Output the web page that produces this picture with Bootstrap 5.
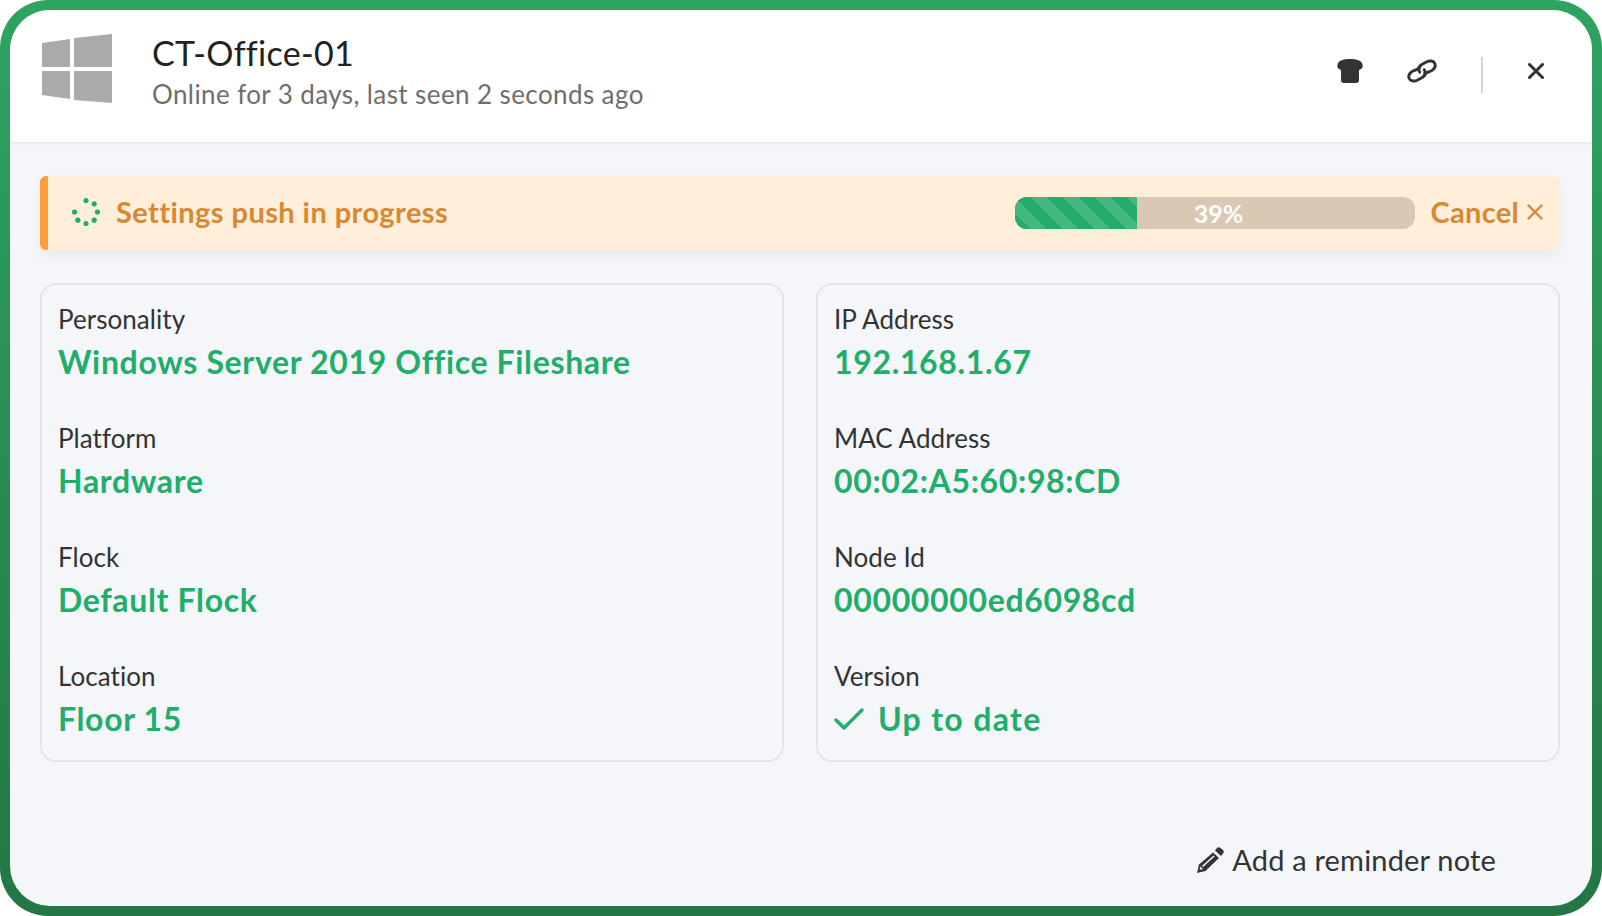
<!DOCTYPE html>
<html lang="en">
<head>
  <meta charset="UTF-8">
  <title>CT-Office-01</title>
  <link href="https://cdn.jsdelivr.net/npm/bootstrap@5.3.0/dist/css/bootstrap.min.css" rel="stylesheet">
  <style>
    html, body { height: 100%; }
    body { font-family: "Lato", "Open Sans", sans-serif; color: #333; background: #fff; }
    .frame { height: 916px; padding: 10px; border-radius: 48px; background: linear-gradient(180deg, #2fa362 0%, #237646 100%); }
    .frame-inner { height: 100%; border-radius: 40px; overflow: hidden; background: #f4f6fa; }
    .head { height: 132px; padding: 24px 48px 0 32px; background: #fff; box-shadow: 0 1px 4px rgba(0,0,0,.07); }
    .head-text { margin-left: 40px; }
    .title { font-size: 34px; line-height: 40px; margin-top: -1px; color: #222; letter-spacing: .3px; }
    .sub { font-size: 26px; line-height: 38px; margin-top: 2px; color: #6e6e6e; letter-spacing: .4px; }
    .tool { margin-top: 25px; line-height: 0; }
    .sep { width: 2px; height: 36px; background: #d4d4d4; margin: 23px 45px 0 44px; }
    .content { padding: 34px 32px 0 30px; }
    .push { height: 74px; border: 0; border-left: 8px solid #ff9f3b; border-radius: 6px; padding: 0 17px 2px 23px; margin: 0; background: #ffeeda; color: #d98832; font-size: 29px; font-weight: 700; box-shadow: 0 6px 16px rgba(0,0,0,.05); }
    .push-label { margin-left: 15px; letter-spacing: .43px; }
    .push-track { width: 400px; height: 32px; border-radius: 12px; background: #d9c9b4; margin-top: 2px; }
    .push-fill { background-color: #22ad6a; background-image: repeating-linear-gradient(45deg, #22ad6a 0, #22ad6a 11.3px, #44b680 11.3px, #44b680 22.6px); }
    .push-pct { left: 8px; right: 0; top: 0; line-height: 33px; text-align: center; color: #fff; font-size: 25px; font-weight: 700; }
    .cancel { margin-left: 16px; letter-spacing: .3px; }
    .info-grid { display: grid; grid-template-columns: 1fr 1fr; column-gap: 32px; margin-top: 33px; }
    .info-box { height: 479px; padding: 17px 16px 0; border: 2px solid #e3e5e9; border-radius: 16px; }
    .field { height: 119px; }
    .field-name { font-size: 26px; line-height: 34px; color: #333; letter-spacing: .05px; }
    .field-val { font-size: 32px; line-height: 44px; margin-top: 4px; font-weight: 700; color: #22ad6a; letter-spacing: .65px; }
    .field-wide { letter-spacing: 1.35px; }
    .note { margin: 80px 64px 0 0; font-size: 29px; line-height: 36px; color: #333; letter-spacing: .18px; }
  </style>
</head>
<body>
  <div class="frame">
    <div class="frame-inner d-flex flex-column">
      <header class="head d-flex">
        <svg width="70" height="70" viewBox="0 0 70 70" fill="#a9aaa9" class="flex-shrink-0">
          <polygon points="0,9 28,5 28,33 0,33"/>
          <polygon points="32,4 70,0 70,33 32,33"/>
          <polygon points="0,37 28,37 28,65 0,61"/>
          <polygon points="32,37 70,37 70,69 32,66"/>
        </svg>
        <div class="head-text flex-grow-1">
          <div class="title">CT-Office-01</div>
          <div class="sub">Online for 3 days, last seen 2 seconds ago</div>
        </div>
        <div class="tool" style="margin-right:44px">
          <svg width="26" height="24" viewBox="0 0 26 24" fill="#333"><path d="M13 0c6 0 10 1 12 4 1 2 1 5-1 6-1 .5-2 .7-2 1.500V21c0 2-1 3-3 3H7c-2 0-3-1-3-3v-9.500c0-.8-1-1-2-1.500C0 9 0 6 1 4c2-3 6-4 12-4z"/></svg>
        </div>
        <div class="tool">
          <svg width="30" height="24" viewBox="0 0 30 24" fill="none" stroke="#333" stroke-width="3"><path d="M13.500 8.800 7 11.500C3 13.500 1 16.500 2.200 19.500c1.200 2.800 5 3.200 8.500 1.500l4.500-2.500c2.800-1.800 3.800-4.300 2.800-6.500-.4-.9-1-1.500-1.800-1.900"/><path d="M16.500 15.200 23 12.500c4-2 6-5 4.800-8-1.200-2.800-5-3.200-8.500-1.500l-4.500 2.500c-2.800 1.800-3.800 4.300-2.800 6.500.4.900 1 1.500 1.800 1.900"/></svg>
        </div>
        <div class="sep"></div>
        <div class="tool" style="margin-top:29px">
          <svg width="16" height="16" viewBox="0 0 16 16" stroke="#333" stroke-width="3" stroke-linecap="round"><path d="M1.500 1.500l13 13M14.500 1.500l-13 13"/></svg>
        </div>
      </header>
      <main class="content">
        <div class="alert push d-flex align-items-center">
          <svg width="30" height="30" viewBox="0 0 30 30" fill="#22ad6a" class="flex-shrink-0">
            <circle cx="15" cy="3.500" r="2.600"/><circle cx="23.200" cy="6.800" r="2.600"/><circle cx="26.500" cy="15" r="2.600"/><circle cx="23.200" cy="23.200" r="2.600"/><circle cx="15" cy="26.500" r="2.600"/><circle cx="6.800" cy="23.200" r="2.600"/><circle cx="3.500" cy="15" r="2.600"/>
          </svg>
          <span class="push-label flex-grow-1">Settings push in progress</span>
          <div class="progress push-track position-relative">
            <div class="progress-bar push-fill" style="width: 30.5%"></div>
            <span class="push-pct position-absolute">39%</span>
          </div>
          <span class="cancel">Cancel</span>
          <svg width="16" height="16" viewBox="0 0 16 16" stroke="#d98832" stroke-width="2.400" stroke-linecap="round" class="ms-2"><path d="M1.500 1.500l13 13M14.500 1.500l-13 13"/></svg>
        </div>
        <div class="info-grid">
          <section class="info-box">
            <div class="field"><div class="field-name">Personality</div><div class="field-val">Windows Server 2019 Office Fileshare</div></div>
            <div class="field"><div class="field-name">Platform</div><div class="field-val">Hardware</div></div>
            <div class="field"><div class="field-name">Flock</div><div class="field-val">Default Flock</div></div>
            <div class="field"><div class="field-name">Location</div><div class="field-val">Floor 15</div></div>
          </section>
          <section class="info-box">
            <div class="field"><div class="field-name">IP Address</div><div class="field-val">192.168.1.67</div></div>
            <div class="field"><div class="field-name">MAC Address</div><div class="field-val">00:02:A5:60:98:CD</div></div>
            <div class="field"><div class="field-name">Node Id</div><div class="field-val">00000000ed6098cd</div></div>
            <div class="field"><div class="field-name">Version</div><div class="field-val field-wide d-flex align-items-center">
              <svg width="30" height="22" viewBox="0 0 30 22" fill="none" stroke="#22ad6a" stroke-width="3.400" stroke-linecap="round" stroke-linejoin="round" style="margin-right:14px"><path d="M2 12l8 8L28 2"/></svg>Up to date</div></div>
          </section>
        </div>
        <div class="note d-flex justify-content-end align-items-center">
          <svg width="28" height="26" viewBox="0 0 28 26" class="me-2 flex-shrink-0"><path d="M21 1c1-1 2.500-1 3.500 0l2.500 2c1 1 1 2.500 0 3.500l-2 2.500-6-5.500z" fill="#333"/><path d="M17 5.500l6 5.500L9.500 24 1 26l2-8.500z" fill="#333"/><path d="M18 9 6.500 19.500" stroke="#f4f6fa" stroke-width="1.600"/><path d="M4.500 19.500l-1 3.500 3.500-1z" fill="#f4f6fa"/></svg>
          Add a reminder note
        </div>
      </main>
    </div>
  </div>
  <script src="https://cdn.jsdelivr.net/npm/bootstrap@5.3.0/dist/js/bootstrap.bundle.min.js"></script>
</body>
</html>
